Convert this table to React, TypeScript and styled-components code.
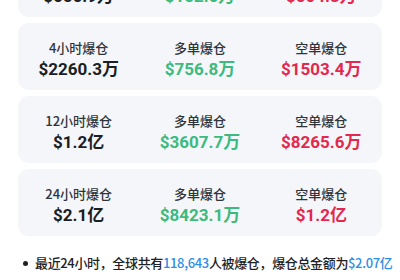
import styled, { createGlobalStyle } from "styled-components";

const GlobalStyle = createGlobalStyle`
  body {
    margin: 0;
    background: #ffffff;
    font-family: "Noto Sans CJK SC", "Noto Sans", sans-serif;
    overflow: hidden;
  }
`;

const Page = styled.div`
  padding: 0 18px;
  margin-top: -50px;
`;

const CardList = styled.div`
  display: flex;
  flex-direction: column;
  gap: 6px;
`;

const Card = styled.div`
  display: grid;
  grid-template-columns: repeat(3, 1fr);
  height: 67px;
  box-sizing: border-box;
  padding: 16px 0 9px;
  background: #f4f6f9;
  border-radius: 11px;
`;

const Cell = styled.div`
  display: flex;
  flex-direction: column;
  align-items: center;
`;

const Label = styled.div`
  font-size: 13px;
  line-height: 18px;
  font-weight: 500;
  color: #2f343b;
`;

const Value = styled.div<{ $tone: "main" | "long" | "short" }>`
  font-family: Roboto, "Noto Sans CJK SC", sans-serif;
  font-size: 17px;
  line-height: 24px;
  font-weight: 700;
  color: ${({ $tone }) =>
    $tone === "long" ? "#3dba7e" : $tone === "short" ? "#e3284f" : "#1b1e23"};
`;

const Note = styled.div`
  display: flex;
  align-items: center;
  margin-top: 17px;
  padding-left: 5px;
  font-size: 13px;
  line-height: 20px;
  font-weight: 500;
  color: #1e2126;
  white-space: nowrap;
  letter-spacing: -0.35px;
`;

const Dot = styled.span`
  width: 5px;
  height: 5px;
  border-radius: 50%;
  background: #1e2126;
  margin-right: 7px;
  flex-shrink: 0;
`;

const Hl = styled.span`
  color: #2c8ee6;
`;

const rows = [
  { label: "1小时爆仓", total: "$656.9万", long: "$152.6万", short: "$504.3万" },
  { label: "4小时爆仓", total: "$2260.3万", long: "$756.8万", short: "$1503.4万" },
  { label: "12小时爆仓", total: "$1.2亿", long: "$3607.7万", short: "$8265.6万" },
  { label: "24小时爆仓", total: "$2.1亿", long: "$8423.1万", short: "$1.2亿" },
];

export default function App() {
  return (
    <>
      <GlobalStyle />
      <Page>
        <CardList>
          {rows.map((r) => (
            <Card key={r.label}>
              <Cell>
                <Label>{r.label}</Label>
                <Value $tone="main">{r.total}</Value>
              </Cell>
              <Cell>
                <Label>多单爆仓</Label>
                <Value $tone="long">{r.long}</Value>
              </Cell>
              <Cell>
                <Label>空单爆仓</Label>
                <Value $tone="short">{r.short}</Value>
              </Cell>
            </Card>
          ))}
        </CardList>
        <Note>
          <Dot />
          <span>
            最近24小时，全球共有<Hl>118,643</Hl>人被爆仓，爆仓总金额为
            <Hl>$2.07亿</Hl>
          </span>
        </Note>
      </Page>
    </>
  );
}
